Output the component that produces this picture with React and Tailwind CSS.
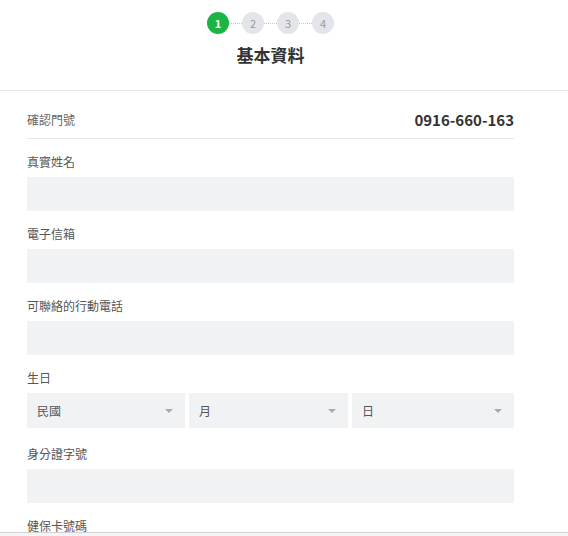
const Field = ({ label, last }) => (
  <div className={last ? "" : "mb-[14px]"}>
    <div className="text-[12px] leading-[18px] text-[#555]">{label}</div>
    <div className="mt-[6px] h-[34px] bg-[#f1f2f4]"></div>
  </div>
);

const Select = ({ text }) => (
  <div className="flex h-[35px] items-center justify-between bg-[#f1f2f4] pl-[10px] pr-[12px]">
    <span className="text-[12px] text-[#555]">{text}</span>
    <span className="h-0 w-0 border-x-[4px] border-t-[4px] border-x-transparent border-t-[#aaa]"></span>
  </div>
);

const Step = ({ n, active }) => (
  <div
    className={
      "flex h-[22px] w-[22px] items-center justify-center rounded-full text-[11px] " +
      (active ? "bg-[#1db446] font-bold text-white" : "bg-[#e4e5e8] text-[#9a9a9a]")
    }
  >
    {n}
  </div>
);

const Dots = () => <div className="w-[13px] border-t border-dotted border-[#c8c8c8]"></div>;

export default function App() {
  return (
    <div className="min-h-screen bg-white font-['Noto_Sans_CJK_TC','Noto_Sans',sans-serif]">
      <div className="h-[91px] border-b border-[#e6e6e6]">
        <div className="flex w-[541px] flex-col items-center pt-[12px]">
          <div className="flex items-center">
            <Step n="1" active />
            <Dots />
            <Step n="2" />
            <Dots />
            <Step n="3" />
            <Dots />
            <Step n="4" />
          </div>
          <div className="mt-[9px] text-[17px] leading-[24px] font-bold text-[#333]">基本資料</div>
        </div>
      </div>

      <div className="w-[541px] px-[27px]">
        <div className="flex items-center justify-between border-b border-[#e8e8e8] pt-[17px] pb-[6px]">
          <span className="text-[12px] leading-[24px] text-[#666]">確認門號</span>
          <span className="text-[15px] leading-[24px] font-bold text-[#333]">0916-660-163</span>
        </div>

        <div className="pt-[14px]">
          <Field label="真實姓名" />
          <Field label="電子信箱" />
          <Field label="可聯絡的行動電話" />

          <div className="mb-[17px]">
            <div className="text-[12px] leading-[18px] text-[#555]">生日</div>
            <div className="mt-[6px] grid grid-cols-[158px_1fr_162px] gap-[4px]">
              <Select text="民國" />
              <Select text="月" />
              <Select text="日" />
            </div>
          </div>

          <Field label="身分證字號" />
          <Field label="健保卡號碼" />
          <Field label="聯絡地址" last />
        </div>
      </div>

      <div className="fixed inset-x-0 bottom-0 h-[4px] border-t border-[#d4d4d4] bg-[#f4f4f4]"></div>
    </div>
  );
}
